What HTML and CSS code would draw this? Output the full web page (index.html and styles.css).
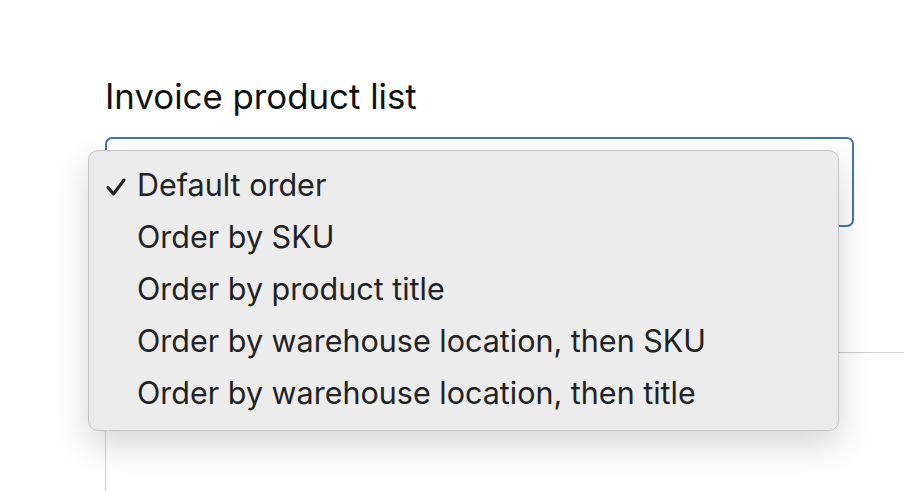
FILE: index.html
```html
<!DOCTYPE html>
<html>
<head>
<meta charset="utf-8">
<link rel="stylesheet" href="styles.css">
</head>
<body>
<div class="page">
  <div class="label">Invoice product list</div>
  <div class="select"></div>
  <div class="panel"></div>
  <ul class="menu">
    <li class="item selected"><svg class="check" width="20" height="18" viewBox="0 0 20 18"><polyline points="2,9.5 7.5,16 18,2" fill="none" stroke="#222" stroke-width="3" stroke-linecap="round" stroke-linejoin="round"/></svg>Default order</li>
    <li class="item">Order by SKU</li>
    <li class="item">Order by product title</li>
    <li class="item">Order by warehouse location, then SKU</li>
    <li class="item">Order by warehouse location, then title</li>
  </ul>
</div>
</body>
</html>
```
FILE: styles.css
```css
html, body {
  margin: 0;
  padding: 0;
  background: #ffffff;
  overflow: hidden;
}
.page {
  position: relative;
  width: 904px;
  height: 491px;
  overflow: hidden;
  padding: 74px 0 0 105px;
  box-sizing: border-box;
  font-family: Inter, "Liberation Sans", sans-serif;
  color: #111;
}
.label {
  font-size: 34.8px;
  line-height: 44px;
  margin-bottom: 19px;
}
.select {
  width: 749px;
  height: 90px;
  box-sizing: border-box;
  border: 2px solid #3e76b1;
  border-radius: 7px;
}
.panel {
  margin-top: 125px;
  height: 139px;
  border-top: 1.5px solid #cbcbcb;
  border-left: 1.5px solid #c9d1db;
}
.menu {
  position: absolute;
  left: 88px;
  top: 150px;
  width: 751px;
  height: 281px;
  box-sizing: border-box;
  margin: 0;
  padding: 8px 0 0 0;
  list-style: none;
  background: #ececec;
  border: 1px solid #c4c4c4;
  border-radius: 10px;
  box-shadow: 0 14px 34px rgba(0,0,0,0.16);
}
.item {
  position: relative;
  height: 52px;
  line-height: 52px;
  padding-left: 48px;
  font-size: 30.5px;
  color: #222;
}
.check {
  position: absolute;
  left: 17px;
  top: 19px;
}
```
